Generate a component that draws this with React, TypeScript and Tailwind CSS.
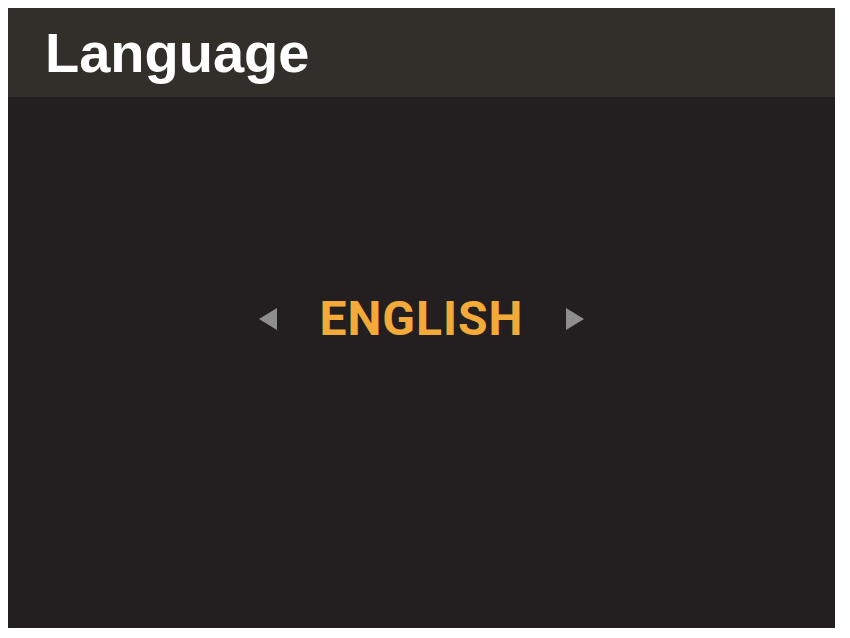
export default function App() {
  return (
    <div className="min-h-screen bg-white p-2">
      <div className="flex h-[620px] w-[827px] flex-col bg-[#231f20]">
        <header className="flex h-[89px] items-center bg-[#322e2a] pl-[37px]">
          <h1 className="font-['Liberation_Sans',Arial,sans-serif] text-[56px] font-bold leading-none text-white">
            Language
          </h1>
        </header>
        <div className="flex flex-1 justify-center pt-[200px]">
          <div className="flex h-[44px] items-center gap-[42px]">
            <span className="h-0 w-0 border-y-[11px] border-r-[18px] border-y-transparent border-r-[#8f8e8f]" />
            <span className="font-['Roboto',sans-serif] text-[48px] font-bold leading-none tracking-[1px] text-[#f3aa38]">
              ENGLISH
            </span>
            <span className="h-0 w-0 border-y-[11px] border-l-[18px] border-y-transparent border-l-[#8f8e8f]" />
          </div>
        </div>
      </div>
    </div>
  );
}
